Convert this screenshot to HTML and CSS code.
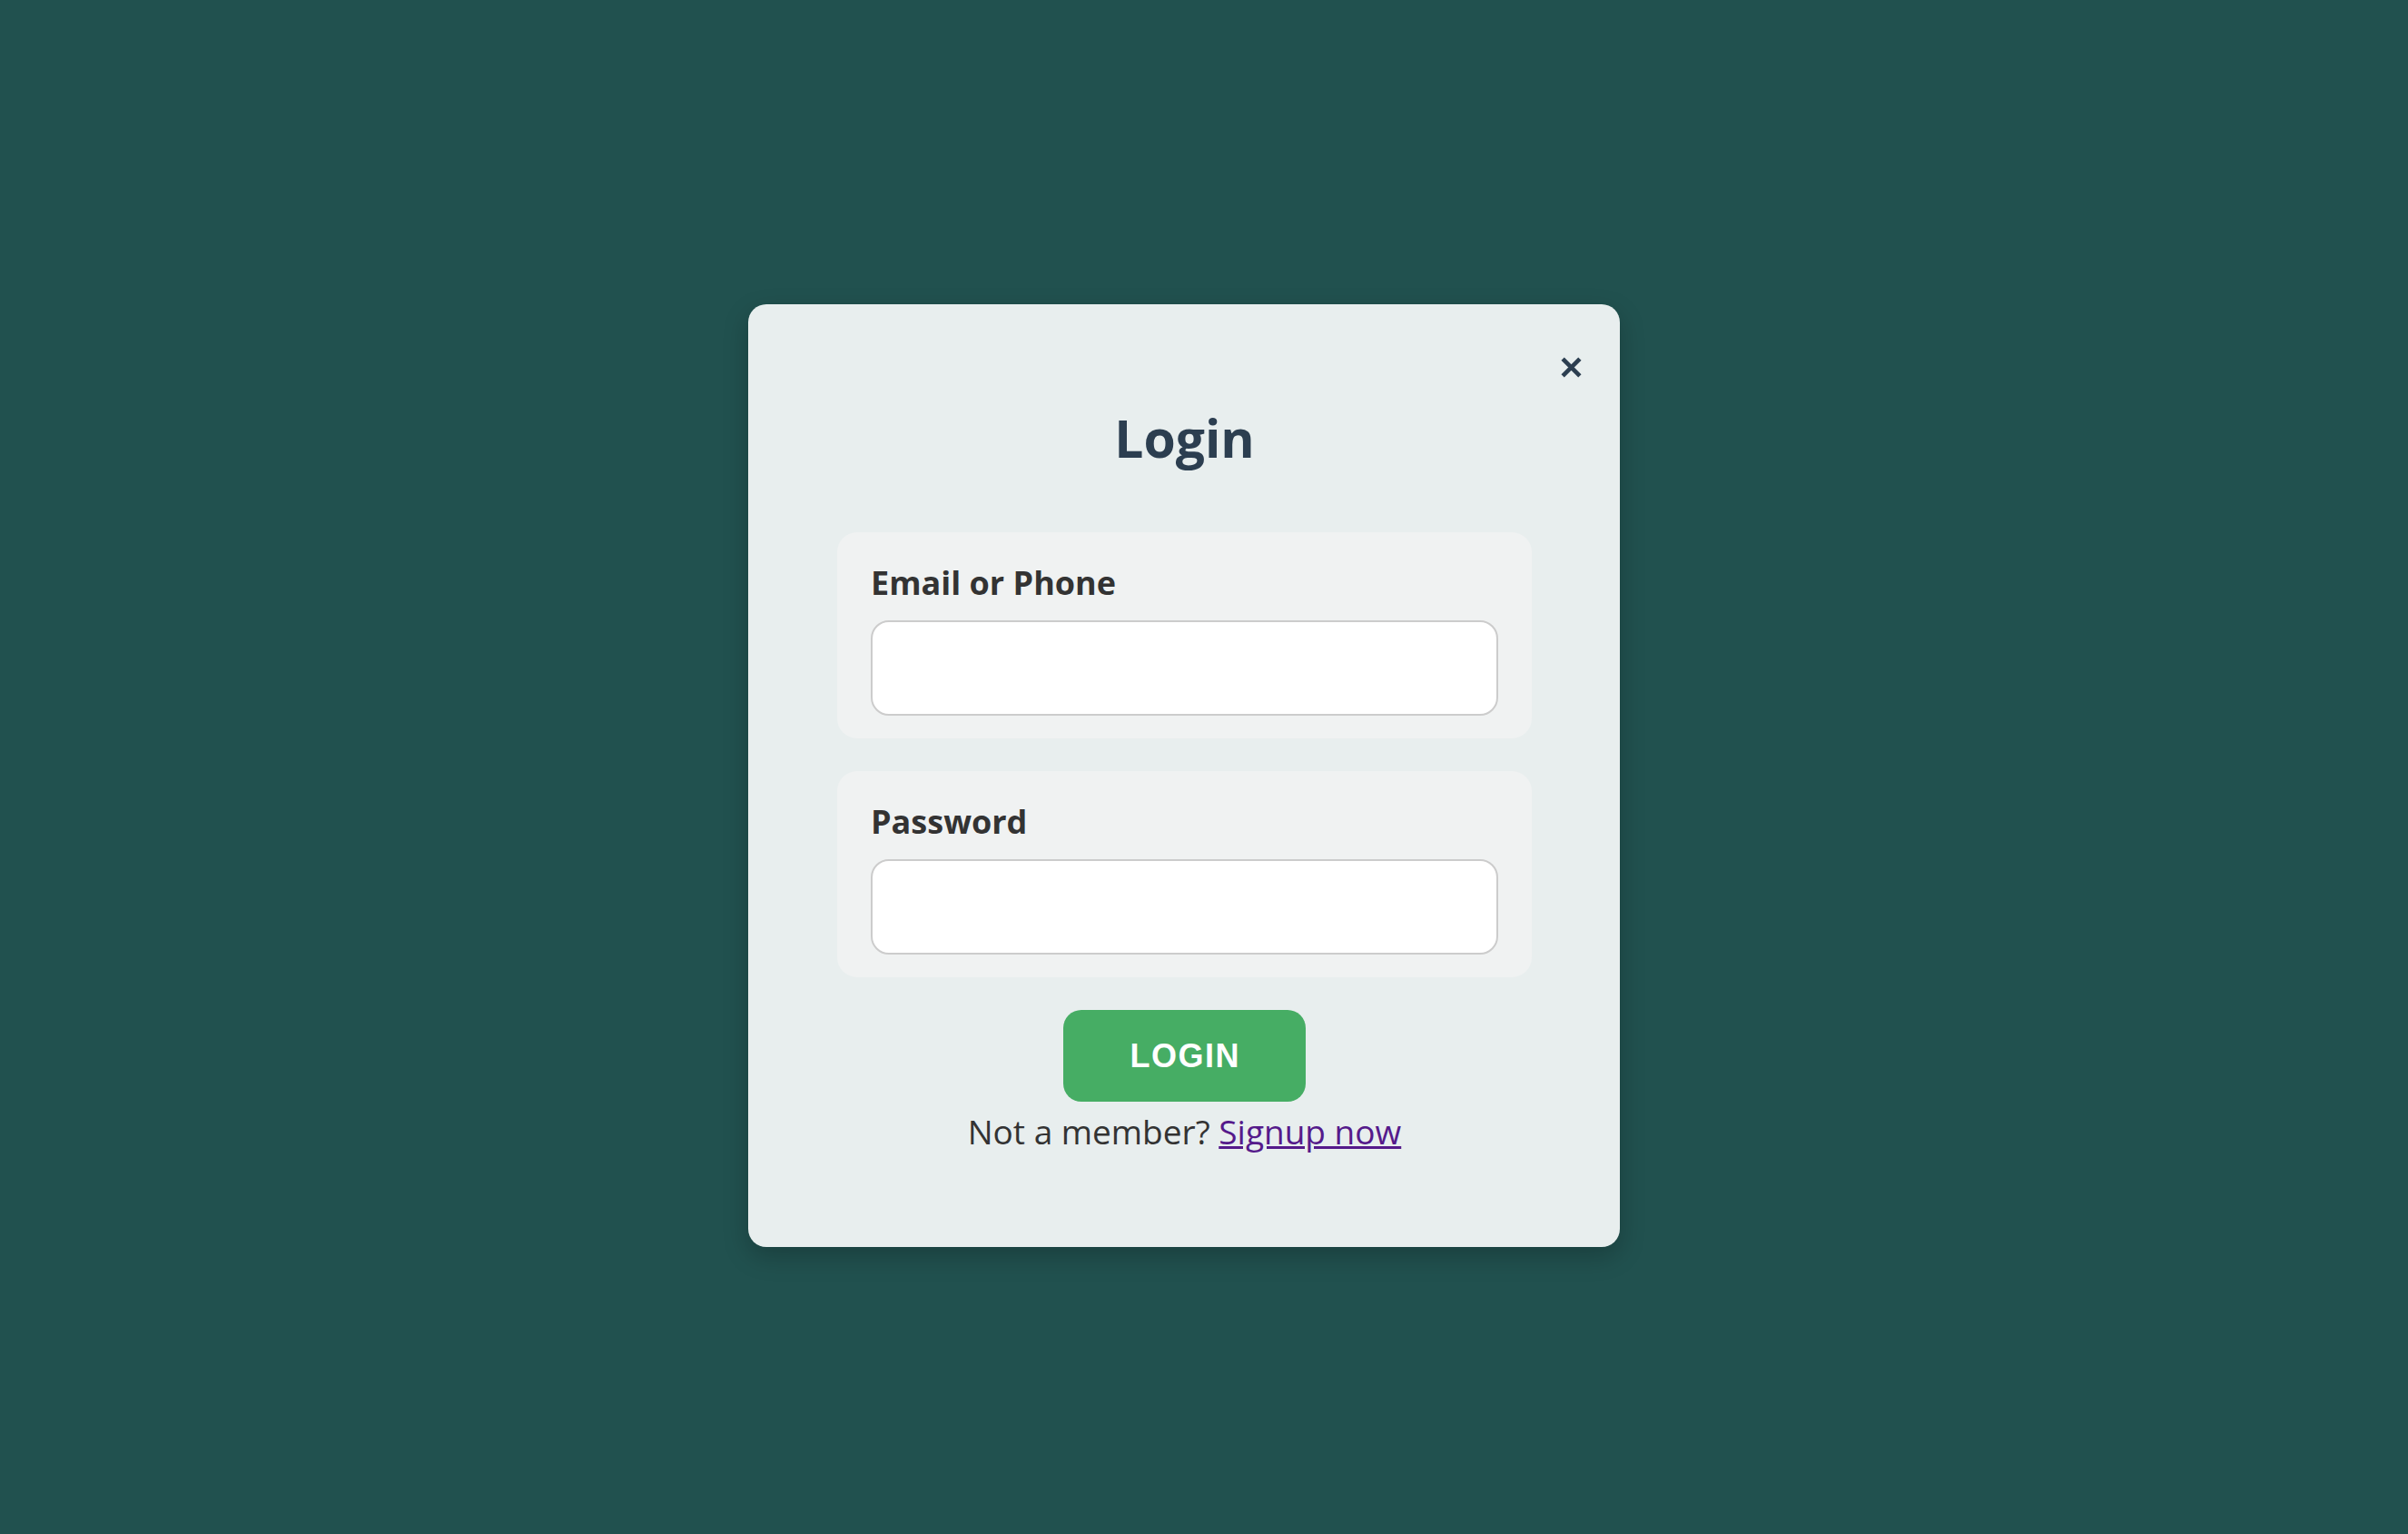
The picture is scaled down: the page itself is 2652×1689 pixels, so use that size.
FILE: index.html
```html
<!DOCTYPE html>
<html lang="en">
<head>
<meta charset="utf-8">
<title>Login</title>
<link rel="stylesheet" href="styles.css">
</head>
<body>
<div class="page">
  <div class="card">
    <button class="close" aria-label="Close">
      <svg width="25" height="25" viewBox="0 0 24 24"><path d="M3 3 L21 21 M21 3 L3 21" stroke="#2c3e50" stroke-width="4.5" stroke-linecap="butt" fill="none"/></svg>
    </button>
    <h1 class="title">Login</h1>
    <div class="field">
      <label class="label">Email or Phone</label>
      <input class="input" type="text">
    </div>
    <div class="field">
      <label class="label">Password</label>
      <input class="input" type="password">
    </div>
    <button class="login-btn">LOGIN</button>
    <p class="signup">Not a member? <a class="signup-link" href="#">Signup now</a></p>
  </div>
</div>
</body>
</html>
```
FILE: styles.css
```css
html, body {
  margin: 0;
  padding: 0;
}
body {
  background: #21514f;
  font-family: "Open Sans", "Noto Sans", sans-serif;
  min-height: 1689px;
}
.page {
  padding: 335px 0 0 824px;
}
.card {
  position: relative;
  box-sizing: border-box;
  width: 960px;
  background: #e8eeee;
  border-radius: 20px;
  padding: 113px 97px 106px 98px;
  box-shadow: 0 10px 28px rgba(0, 0, 0, 0.22);
  display: flex;
  flex-direction: column;
  align-items: center;
}
.close {
  position: absolute;
  top: 57px;
  right: 41px;
  width: 25px;
  height: 25px;
  padding: 0;
  border: 0;
  background: none;
  display: block;
}
.close svg {
  display: block;
}
.title {
  margin: 0 0 70px;
  font-size: 57px;
  line-height: 68px;
  font-weight: 700;
  color: #2c3e50;
}
.field {
  box-sizing: border-box;
  width: 765px;
  background: #f0f2f2;
  border-radius: 22px;
  padding: 33px 37px 25px;
  display: flex;
  flex-direction: column;
}
.field + .field {
  margin-top: 36px;
}
.label {
  display: block;
  font-size: 36px;
  line-height: 46px;
  font-weight: 700;
  color: #333333;
  margin-bottom: 18px;
}
.input {
  box-sizing: border-box;
  width: 100%;
  height: 105px;
  border: 2px solid #cccccc;
  border-radius: 20px;
  background: #ffffff;
  margin: 0;
}
.login-btn {
  margin-top: 36px;
  width: 267px;
  height: 101px;
  border: 0;
  border-radius: 20px;
  background: #46ad64;
  color: #ffffff;
  font-family: "Liberation Sans", Arial, sans-serif;
  font-weight: 700;
  font-size: 36px;
  letter-spacing: 1.5px;
  text-indent: 1.5px;
  padding: 0;
}
.signup {
  margin: 11px 0 0;
  font-size: 37px;
  line-height: 43px;
  color: #333333;
}
.signup-link {
  color: #551a8b;
  text-decoration: underline;
}
```
